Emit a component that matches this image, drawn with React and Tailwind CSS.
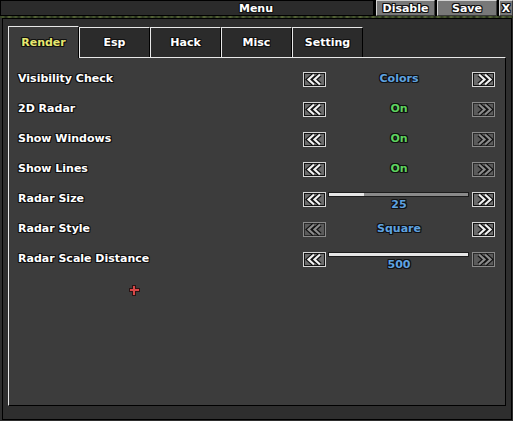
const outline =
  "[text-shadow:1px_0_0_#111,-1px_0_0_#111,0_1px_0_#111,0_-1px_0_#111,1px_1px_0_#111,-1px_-1px_0_#111,1px_-1px_0_#111,-1px_1px_0_#111]";

const rows = [
  { label: "Visibility Check", value: "Colors", color: "text-[#5fa3e0]", left: true, right: true },
  { label: "2D Radar", value: "On", color: "text-[#5fd35f]", left: true, right: false },
  { label: "Show Windows", value: "On", color: "text-[#5fd35f]", left: true, right: false },
  { label: "Show Lines", value: "On", color: "text-[#5fd35f]", left: true, right: false },
  { label: "Radar Size", value: "25", color: "text-[#5fa3e0]", left: true, right: true, slider: 25 },
  { label: "Radar Style", value: "Square", color: "text-[#5fa3e0]", left: false, right: true },
  { label: "Radar Scale Distance", value: "500", color: "text-[#5fa3e0]", left: true, right: false, slider: 100 },
];

const tabs = ["Render", "Esp", "Hack", "Misc", "Setting"];

function Arrow({ dir, enabled }) {
  const pts =
    dir === "left"
      ? ["10,1.5 4.5,6.5 10,11.5", "16,1.5 10.5,6.5 16,11.5"]
      : ["6,1.5 11.5,6.5 6,11.5", "12,1.5 17.5,6.5 12,11.5"];
  return (
    <div
      className={
        "w-[23px] h-[15px] border flex items-center justify-center " +
        (enabled
          ? "border-[#d6d6d6] bg-[#6c6c6c] shadow-[inset_0_0_0_1px_#141414]"
          : "border-[#8a8a8a] bg-[#5b5b5b] shadow-[inset_0_0_0_1px_#2a2a2a]")
      }
    >
      <svg width="21" height="13" viewBox="0 0 21 13">
        {pts.map((p) => (
          <polyline key={p + "o"} points={p} fill="none" stroke="#111" strokeWidth="4.5" strokeLinejoin="miter" />
        ))}
        {pts.map((p) => (
          <polyline
            key={p}
            points={p}
            fill="none"
            stroke={enabled ? "#f2f2f2" : "#8c8c8c"}
            strokeWidth="2.2"
            strokeLinejoin="miter"
          />
        ))}
      </svg>
    </div>
  );
}

function Row({ row }) {
  return (
    <div className="h-[30px] flex items-center">
      <div className={"flex-1 text-[11px] font-bold text-white " + outline}>{row.label}</div>
      <div className="flex items-center w-[192px]">
        <Arrow dir="left" enabled={row.left} />
        <div className="flex-1 relative h-[15px] flex items-center justify-center">
          {row.slider ? (
            <>
              <div className="absolute left-[2px] right-[3px] top-0 h-[5px] border border-[#1c1c1c] bg-[#8a8a8a]">
                <div className="h-full bg-[#e6e6e6]" style={{ width: row.slider + "%" }} />
              </div>
              <span className={"absolute top-[5px] text-[11px] font-bold " + row.color + " " + outline}>
                {row.value}
              </span>
            </>
          ) : (
            <span className={"text-[11px] font-bold " + row.color + " " + outline}>{row.value}</span>
          )}
        </div>
        <Arrow dir="right" enabled={row.right} />
      </div>
    </div>
  );
}

export default function App() {
  return (
    <div className="w-[513px] h-[421px] bg-[#2e2e2e] flex flex-col font-['DejaVu_Sans',sans-serif] select-none">
      {/* title bar */}
      <div className="h-[16px] flex bg-[#111]">
        <div className="flex-1 border border-black bg-[#2b2b2b] flex items-center justify-center pl-[138px]">
          <span className={"text-[11px] font-bold text-white leading-none " + outline}>Menu</span>
        </div>
        <div className="flex gap-[2px] bg-black pl-[2px]">
          {[
            ["Disable", "w-[59px]"],
            ["Save", "w-[60px]"],
            ["X", "w-[14px]"],
          ].map(([t, w]) => (
            <div
              key={t}
              className={
                w +
                " h-[16px] bg-[#787878] border-t border-l border-[#d4d4d4] border-r border-b border-r-[#3a3a3a] border-b-[#3a3a3a] flex items-center justify-center"
              }
            >
              <span className={"text-[11px] font-bold text-white leading-none " + outline}>{t}</span>
            </div>
          ))}
        </div>
      </div>
      {/* background strip */}
      <div className="h-[2px] bg-[repeating-linear-gradient(90deg,#2f3a24_0px,#4a5a30_3px,#1f2618_6px,#5a6a3a_9px,#2b3320_13px)]" />
      {/* window frame */}
      <div className="flex-1 flex flex-col ml-[2px] mr-px mb-px border border-black bg-[#2e2e2e] pl-[5px] pr-[5px] pt-[7px] pb-[13px]">
        <div className="flex h-[31px]">
          {tabs.map((t, i) => (
            <div
              key={t}
              className={
                "w-[71px] flex items-center justify-center pt-[2px] border-l border-t border-r border-l-[#e8e8e8] border-t-[#e8e8e8] border-r-black " +
                (i === 0 ? "bg-[#3c3c3c] relative z-10 h-[32px]" : "bg-[#2b2b2b] mt-px h-[30px]")
              }
            >
              <span
                className={
                  "text-[11px] font-bold " + (i === 0 ? "text-[#e6e66e]" : "text-white") + " " + outline
                }
              >
                {t}
              </span>
            </div>
          ))}
        </div>
        <div className="flex-1 relative bg-[#3c3c3c] border-t border-l border-t-[#e8e8e8] border-l-[#e8e8e8] border-r border-b border-black pl-[9px] pr-[10px] pt-[6px]">
          {rows.map((r) => (
            <Row key={r.label} row={r} />
          ))}
          <div className="absolute left-[120px] top-[227px] w-[11px] h-[11px]">
            <div className="absolute left-[3px] top-0 w-[4px] h-[11px] bg-[#2a1414]" />
            <div className="absolute left-0 top-[3px] w-[11px] h-[4px] bg-[#2a1414]" />
            <div className="absolute left-[4px] top-px w-[2px] h-[9px] bg-[#d84848]" />
            <div className="absolute left-px top-[4px] w-[9px] h-[2px] bg-[#d84848]" />
          </div>
        </div>
      </div>
    </div>
  );
}
